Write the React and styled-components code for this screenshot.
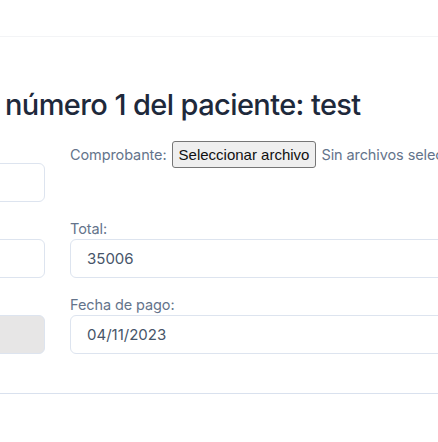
import React from "react";
import styled, { createGlobalStyle } from "styled-components";

const GlobalStyle = createGlobalStyle`
  html, body {
    margin: 0;
    padding: 0;
    background: #fff;
    overflow: hidden;
  }
  body {
    font-family: "Inter", "Open Sans", sans-serif;
  }
`;

const Page = styled.div`
  width: 438px;
  height: 442px;
  overflow: hidden;
`;

const TopBar = styled.div`
  height: 36px;
  border-bottom: 1px solid #f3f4f6;
`;

const Card = styled.div`
  padding-top: 50px;
  border-bottom: 1px solid #d9e1ee;
  padding-bottom: 21px;
`;

const Title = styled.h2`
  margin: 0 0 18px 5px;
  font-size: 29px;
  font-weight: 500;
  letter-spacing: -0.6px;
  color: #1e293b;
  line-height: 36px;
  white-space: nowrap;
`;

const Columns = styled.div`
  display: grid;
  grid-template-columns: 300px 420px;
  column-gap: 25px;
  margin-left: -255px;
`;

const Column = styled.div`
  display: flex;
  flex-direction: column;
  padding-top: ${(p) => p.$offset || 0}px;
`;

const Field = styled.div`
  display: flex;
  flex-direction: column;
  gap: 2px;
  margin-bottom: 18px;
`;

const FileField = styled.div`
  display: flex;
  align-items: center;
  height: 28px;
  margin-top: -1px;
  margin-bottom: 52px;
`;

const Label = styled.label`
  font-size: 14.5px;
  line-height: 17px;
  color: #64748b;
  letter-spacing: -0.1px;
  white-space: nowrap;
`;

const Input = styled.div`
  box-sizing: border-box;
  height: 39px;
  border: 1px solid #dde4ef;
  border-radius: 6px;
  background: ${(p) => (p.disabled ? "#e7e6e6" : "#fff")};
  padding: 0 16px;
  display: flex;
  align-items: center;
  font-size: 15px;
  color: #475569;
`;

const FileButton = styled.button`
  font-family: "Liberation Sans", Arial, sans-serif;
  font-size: 15px;
  color: #111;
  background: #efefef;
  border: 1px solid #767676;
  border-radius: 3px;
  height: 27px;
  padding: 0 6px;
  margin: 0 5px;
  white-space: nowrap;
`;

const FileName = styled.span`
  font-size: 14.5px;
  color: #64748b;
  letter-spacing: -0.1px;
  white-space: nowrap;
`;

export default function App() {
  return (
    <>
      <GlobalStyle />
      <Page>
        <TopBar />
        <Card>
          <Title>número 1 del paciente: test</Title>
          <Columns>
            <Column $offset={3}>
              <Field>
                <Label>&nbsp;</Label>
                <Input />
              </Field>
              <Field>
                <Label>&nbsp;</Label>
                <Input />
              </Field>
              <Field>
                <Label>&nbsp;</Label>
                <Input disabled />
              </Field>
            </Column>
            <Column>
              <FileField>
                <Label>Comprobante:</Label>
                <FileButton type="button">Seleccionar archivo</FileButton>
                <FileName>Sin archivos seleccionados</FileName>
              </FileField>
              <Field>
                <Label>Total:</Label>
                <Input>35006</Input>
              </Field>
              <Field>
                <Label>Fecha de pago:</Label>
                <Input>04/11/2023</Input>
              </Field>
            </Column>
          </Columns>
        </Card>
      </Page>
    </>
  );
}
